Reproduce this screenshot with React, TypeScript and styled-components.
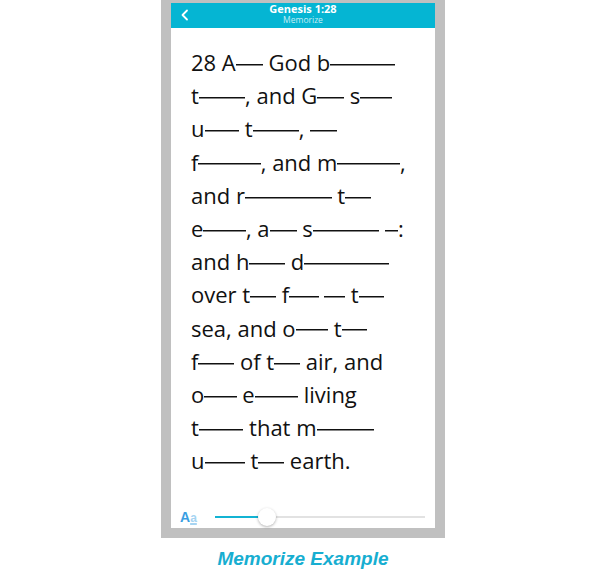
import React from "react";
import styled, { createGlobalStyle } from "styled-components";

const GlobalStyle = createGlobalStyle`
  html, body {
    margin: 0;
    padding: 0;
    background: #ffffff;
  }
`;

type Part = string | { hidden: string };

const verse: Part[][] = [
  ["28 A", { hidden: "nd" }, " God b", { hidden: "lessed" }],
  ["t", { hidden: "hem" }, ", and G", { hidden: "od" }, " s", { hidden: "aid" }],
  ["u", { hidden: "nto" }, " t", { hidden: "hem" }, ", ", { hidden: "Be" }],
  ["f", { hidden: "ruitful" }, ", and m", { hidden: "ultiply" }, ","],
  ["and r", { hidden: "eplenish" }, " t", { hidden: "he" }],
  ["e", { hidden: "arth" }, ", a", { hidden: "nd" }, " s", { hidden: "ubdue" }, " ", { hidden: "it" }, ":"],
  ["and h", { hidden: "ave" }, " d", { hidden: "ominion" }],
  ["over t", { hidden: "he" }, " f", { hidden: "ish" }, " ", { hidden: "of" }, " t", { hidden: "he" }],
  ["sea, and o", { hidden: "ver" }, " t", { hidden: "he" }],
  ["f", { hidden: "owl" }, " of t", { hidden: "he" }, " air, and"],
  ["o", { hidden: "ver" }, " e", { hidden: "very" }, " living"],
  ["t", { hidden: "hing" }, " that m", { hidden: "oveth" }],
  ["u", { hidden: "pon" }, " t", { hidden: "he" }, " earth."],
];

const App: React.FC = () => {
  return (
    <>
      <GlobalStyle />
      <Page>
        <Phone>
          <Screen>
            <Header>
              <BackButton>
                <svg width="10" height="12" viewBox="0 0 10 12">
                  <polyline
                    points="7,1.5 2.5,6 7,10.5"
                    fill="none"
                    stroke="#ffffff"
                    strokeWidth="1.8"
                    strokeLinecap="round"
                    strokeLinejoin="round"
                  />
                </svg>
              </BackButton>
              <Title>Genesis 1:28</Title>
              <Subtitle>Memorize</Subtitle>
            </Header>

            <Verse>
              {verse.map((line, i) => (
                <Line key={i}>
                  {line.map((part, j) =>
                    typeof part === "string" ? (
                      <React.Fragment key={j}>{part}</React.Fragment>
                    ) : (
                      <Hidden key={j}>{part.hidden}</Hidden>
                    )
                  )}
                </Line>
              ))}
            </Verse>

            <Toolbar>
              <FontIcon>
                A<small>a</small>
              </FontIcon>
              <Slider>
                <Fill style={{ width: "25%" }} />
                <Thumb style={{ left: "25%" }} />
              </Slider>
            </Toolbar>
          </Screen>
        </Phone>
        <Caption>Memorize Example</Caption>
      </Page>
    </>
  );
};

export default App;

const Page = styled.div`
  width: 600px;
  height: 585px;
  box-sizing: border-box;
  padding-left: 6px;
  display: flex;
  flex-direction: column;
  align-items: center;
`;

const Phone = styled.div`
  width: 284px;
  height: 538px;
  box-sizing: border-box;
  padding: 3px 10px 10px;
  background: #c0c0c0;
`;

const Screen = styled.div`
  height: 100%;
  background: #ffffff;
  display: flex;
  flex-direction: column;
`;

const Header = styled.div`
  position: relative;
  height: 25px;
  background: #05b5d3;
  display: flex;
  flex-direction: column;
  align-items: center;
  font-family: "Open Sans", sans-serif;
  color: #ffffff;
`;

const BackButton = styled.div`
  position: absolute;
  left: 9px;
  top: 6px;
  display: flex;
`;

const Title = styled.div`
  margin-top: -1px;
  font-size: 11px;
  font-weight: 700;
  line-height: 13px;
`;

const Subtitle = styled.div`
  font-size: 8.5px;
  line-height: 10px;
  color: #c4ecf4;
`;

const Verse = styled.div`
  flex: 1;
  padding: 18px 0 0 20px;
  font-family: "Open Sans", sans-serif;
  font-size: 22px;
  line-height: 33.2px;
  color: #111111;
  font-variant-ligatures: none;
`;

const Line = styled.div`
  white-space: nowrap;
`;

const Hidden = styled.span`
  color: transparent;
  background: linear-gradient(#111111, #111111) no-repeat 0 59% / 100% 1.5px;
`;

const Toolbar = styled.div`
  height: 22px;
  padding: 0 10px 0 9px;
  display: flex;
  align-items: center;
  gap: 18px;
`;

const FontIcon = styled.div`
  font-family: "Liberation Sans", Arial, sans-serif;
  font-size: 14px;
  font-weight: 700;
  color: #3a9ee2;
  display: flex;
  align-items: baseline;

  small {
    font-size: 12px;
    color: #a6d4f2;
    text-decoration: underline;
    text-decoration-thickness: 1.5px;
  }
`;

const Slider = styled.div`
  position: relative;
  flex: 1;
  height: 2px;
  background: #e2e2e2;
`;

const Fill = styled.div`
  height: 100%;
  background: #13b3d3;
`;

const Thumb = styled.div`
  position: absolute;
  top: 50%;
  width: 18px;
  height: 18px;
  border-radius: 50%;
  background: #ffffff;
  box-shadow: 0 1px 3px rgba(0, 0, 0, 0.3);
  transform: translate(-50%, -50%);
`;

const Caption = styled.div`
  margin-top: 10px;
  font-family: "Liberation Sans", Arial, sans-serif;
  font-size: 19px;
  font-weight: 700;
  font-style: italic;
  color: #17aed1;
`;
